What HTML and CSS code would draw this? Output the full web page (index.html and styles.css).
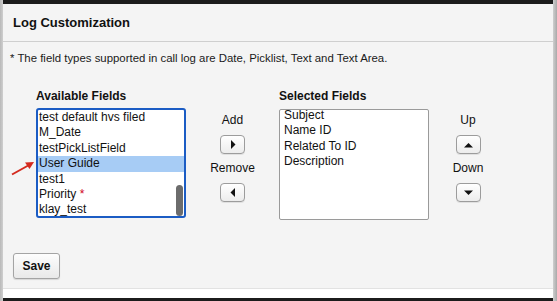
FILE: index.html
```html
<!DOCTYPE html>
<html lang="en">
<head>
    <meta charset="UTF-8">
    <meta name="viewport" content="width=device-width, initial-scale=1.0">
    <title>Log Customization</title>
    <link rel="stylesheet" href="styles.css">
</head>
<body>
    <div class="frame">
        <div class="panel">
            <div class="panel-header">Log Customization</div>
            <p class="note">* The field types supported in call log are Date, Picklist, Text and Text Area.</p>

            <div class="fields">
                <!-- Available -->
                <div class="field-col">
                    <div class="col-title">Available Fields</div>
                    <div class="listbox listbox-focus">
                        <div class="list-item">test default hvs filed</div>
                        <div class="list-item">M_Date</div>
                        <div class="list-item">testPickListField</div>
                        <div class="list-item selected">User Guide</div>
                        <div class="list-item">test1</div>
                        <div class="list-item">Priority <span class="req">*</span></div>
                        <div class="list-item">klay_test</div>
                        <div class="scroll-thumb"></div>
                    </div>
                    <svg class="pointer" width="26" height="16" viewBox="0 0 26 16">
                        <line x1="1" y1="14.5" x2="19" y2="4.5" stroke="#d42a1e" stroke-width="2"/>
                        <polygon points="23,2 14,2.5 18.5,9" fill="#d42a1e"/>
                    </svg>
                </div>

                <!-- Add / Remove -->
                <div class="btn-col">
                    <div class="btn-label">Add</div>
                    <button class="arrow-btn">
                        <svg width="6" height="9" viewBox="0 0 6 9"><polygon points="1,0 5.5,4.5 1,9" fill="#111"/></svg>
                    </button>
                    <div class="btn-label">Remove</div>
                    <button class="arrow-btn">
                        <svg width="6" height="9" viewBox="0 0 6 9"><polygon points="5,0 0.5,4.5 5,9" fill="#111"/></svg>
                    </button>
                </div>

                <!-- Selected -->
                <div class="field-col">
                    <div class="col-title">Selected Fields</div>
                    <div class="listbox listbox-plain">
                        <div class="list-inner">
                            <div class="list-item">Subject</div>
                            <div class="list-item">Name ID</div>
                            <div class="list-item">Related To ID</div>
                            <div class="list-item">Description</div>
                        </div>
                    </div>
                </div>

                <!-- Up / Down -->
                <div class="btn-col btn-col-order">
                    <div class="btn-label">Up</div>
                    <button class="arrow-btn">
                        <svg width="9" height="6" viewBox="0 0 9 6"><polygon points="0,5.5 4.5,1 9,5.5" fill="#111"/></svg>
                    </button>
                    <div class="btn-label">Down</div>
                    <button class="arrow-btn">
                        <svg width="9" height="6" viewBox="0 0 9 6"><polygon points="0,0.5 4.5,5 9,0.5" fill="#111"/></svg>
                    </button>
                </div>
            </div>

            <button class="save-btn">Save</button>
        </div>
        <div class="bottom-strip"></div>
    </div>
</body>
</html>
```

FILE: styles.css
```css
body {
    margin: 0;
    font-family: "Liberation Sans", Arial, sans-serif;
    background: linear-gradient(to right, #b9b9b9 0, #cfcfcf 3px, #cfcfcf 553px, #a9a9a9 557px);
    height: 301px;
    overflow: hidden;
}

.frame {
    margin: 0 4px 0 3px;
    border-top: 4px solid #1c1c1c;
    border-bottom: 3px solid #1c1c1c;
    box-sizing: border-box;
    height: 301px;
    display: flex;
    flex-direction: column;
}

.panel {
    background-color: #f4f4f4;
    height: 284px;
    box-sizing: border-box;
    display: flex;
    flex-direction: column;
}

.panel-header {
    height: 37px;
    line-height: 38px;
    padding-left: 10px;
    font-size: 13px;
    font-weight: bold;
    color: #111;
    border-bottom: 1px solid #cfcfcf;
}

.note {
    margin: 0;
    padding: 9px 7px 0;
    font-size: 11.4px;
    line-height: 14px;
    color: #1a1a1a;
}

.fields {
    display: flex;
    padding-left: 33px;
    margin-top: 24px;
}

.field-col {
    position: relative;
    display: flex;
    flex-direction: column;
}

.col-title {
    font-size: 12px;
    font-weight: bold;
    line-height: 14px;
    margin-bottom: 5px;
    color: #111;
}

.listbox {
    position: relative;
    width: 150px;
    height: 110px;
    background: #fff;
    box-sizing: border-box;
    overflow: hidden;
    font-size: 12px;
    color: #111;
}

.listbox-focus {
    border: 2px solid #1b5cc4;
    border-radius: 3px;
}

.listbox-plain {
    border: 1px solid #9a9a9a;
    border-radius: 2px;
    height: 111px;
    margin-top: 1px;
    padding-left: 3px;
}

.list-inner {
    margin-top: -2px;
}

.list-item {
    line-height: 15.4px;
    padding-left: 1px;
    white-space: nowrap;
}

.list-item.selected {
    background-color: #a7ccf5;
}

.req {
    color: #d0021b;
}

.scroll-thumb {
    position: absolute;
    right: 1px;
    bottom: 0;
    width: 7px;
    height: 31px;
    border-radius: 4px;
    background-color: #6c6c6c;
}

.pointer {
    position: absolute;
    left: -25px;
    top: 71px;
}

.btn-col {
    width: 93px;
    display: flex;
    flex-direction: column;
    align-items: center;
    padding-top: 24px;
}

.btn-col-order {
    width: 78px;
}

.btn-label {
    font-size: 12px;
    line-height: 14px;
    color: #111;
}

.arrow-btn {
    width: 25px;
    height: 19px;
    margin: 8px 0 7px;
    padding: 0;
    display: flex;
    align-items: center;
    justify-content: center;
    background: linear-gradient(#ffffff, #ececec);
    border: 1px solid #9c9c9c;
    border-radius: 4px;
    box-shadow: 0 1px 0 rgba(0, 0, 0, 0.08);
}

.save-btn {
    align-self: flex-start;
    margin: 33px 0 0 10px;
    width: 47px;
    height: 26px;
    padding: 0;
    font-family: "Liberation Sans", Arial, sans-serif;
    font-size: 12px;
    font-weight: bold;
    color: #111;
    background: linear-gradient(#fdfdfd, #e9e9e9);
    border: 1px solid #a4a4a4;
    border-radius: 3px;
    box-shadow: 0 1px 1px rgba(0, 0, 0, 0.12);
}

.bottom-strip {
    flex: 1;
    background-color: #fff;
    border-top: 1px solid #e2e2e2;
}
```
